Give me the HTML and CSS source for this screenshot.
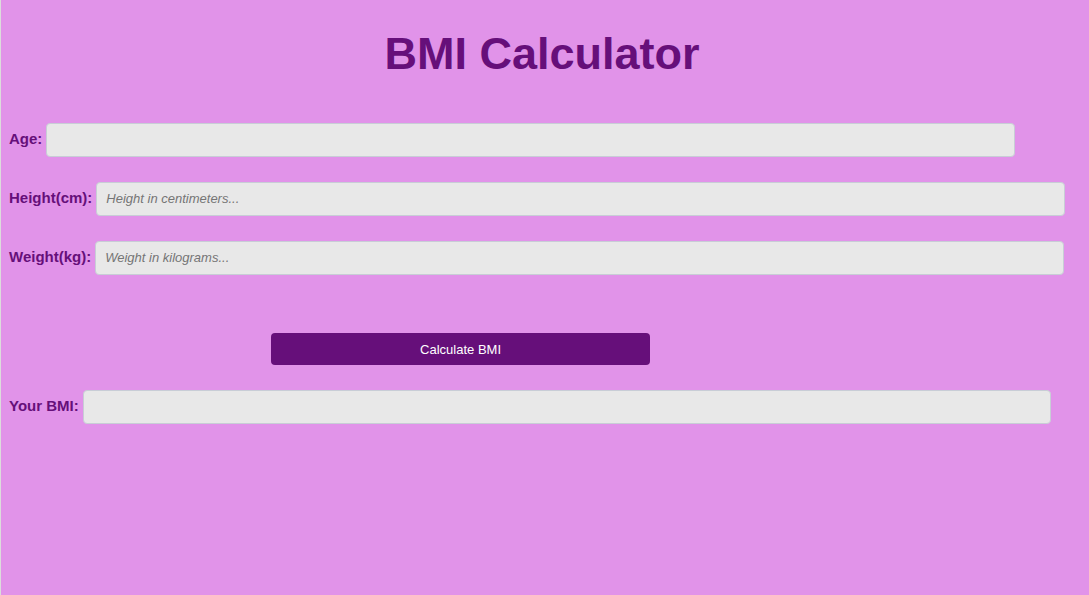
FILE: index.html
```html
<!DOCTYPE html>
<html lang="en">
<head>
<meta charset="utf-8">
<title>BMI Calculator</title>
<link rel="stylesheet" href="styles.css">
</head>
<body>
<h1 class="title">BMI Calculator</h1>
<form class="form">
  <div class="row"><label class="label" for="age">Age:</label> <input class="field" id="age" type="text"></div>
  <div class="row"><label class="label" for="height">Height(cm):</label> <input class="field" id="height" type="text" placeholder="Height in centimeters..."></div>
  <div class="row"><label class="label" for="weight">Weight(kg):</label> <input class="field" id="weight" type="text" placeholder="Weight in kilograms..."></div>
  <button class="submit" type="button">Calculate BMI</button>
  <div class="row"><label class="label" for="bmi">Your BMI:</label> <input class="field" id="bmi" type="text" readonly></div>
</form>
</body>
</html>
```
FILE: styles.css
```css
html {
  min-height: 100%;
  background: #e193e9;
  border-left: 1px solid #dcdcdc;
}

body {
  margin: 0;
  padding: 0 14px 0 8px;
  font-family: "Liberation Sans", Arial, sans-serif;
  color: #660f7a;
}

.title {
  margin: 28px 0 44px;
  font-size: 45px;
  line-height: 51px;
  text-align: center;
}

.form {
  display: flex;
  flex-direction: column;
  gap: 25px;
}

.row {
  display: flex;
  align-items: center;
  gap: 4px;
}

.label {
  padding-bottom: 4px;
  font-size: 15px;
  font-weight: bold;
  white-space: nowrap;
}

.field {
  width: 89%;
  height: 30px;
  padding: 0 9px 2px;
  border: 1px solid #c8cdd6;
  border-radius: 4px;
  background: #e8e8e8;
  font: 13px "Liberation Sans", Arial, sans-serif;
}

.field::placeholder {
  color: #757575;
  font-style: italic;
}

.submit {
  box-sizing: content-box;
  width: 35%;
  height: 32px;
  margin: 33px 0 0 262px;
  padding: 0 3px;
  border: 0;
  border-radius: 4px;
  background: #660f7a;
  color: #fff;
  font: 13px "Liberation Sans", Arial, sans-serif;
}
```
